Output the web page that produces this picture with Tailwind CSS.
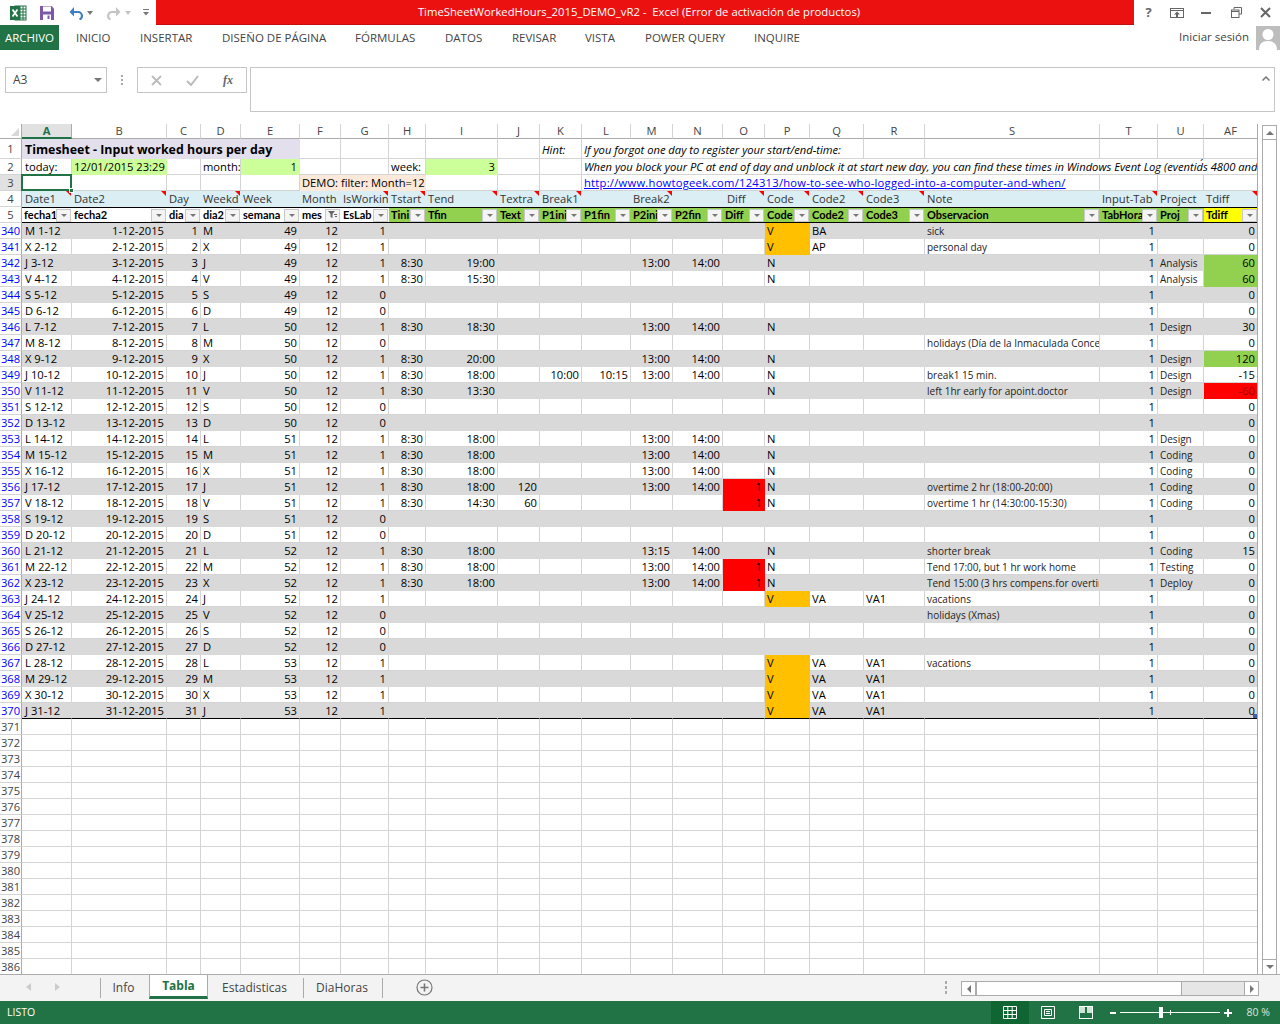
<!DOCTYPE html>
<html lang="es">
<head>
<meta charset="utf-8">
<title>Excel</title>
<script src="https://cdn.jsdelivr.net/npm/@tailwindcss/browser@4"></script>
</head>
<body class="m-0 bg-white">
<div class="w-[1280px] h-[1024px] overflow-hidden flex flex-col bg-white font-['Open_Sans','Liberation_Sans',sans-serif] text-[#444]">

  <!-- title bar -->
  <div class="h-[25px] flex shrink-0">
    <div class="w-[156px] flex items-center relative shrink-0">
      <svg class="ml-[9px]" width="18" height="18" viewBox="0 0 18 18"><rect x="6" y="2" width="11" height="14" fill="#fff" stroke="#217346"/><path d="M11 2v14M14 2v14M6 5h11M6 8h11M6 11h11M6 14h11" stroke="#217346" stroke-width="1"/><rect x="1" y="2" width="10" height="14" fill="#217346"/><path d="M3.5 5.5l5 7M8.500 5.500l-5 7" stroke="#fff" stroke-width="1.800"/></svg>
      <svg class="ml-[12px]" width="16" height="16" viewBox="0 0 16 16"><path d="M1 1h11.500L15 3.500V15H1z" fill="#7e57a8"/><rect x="4" y="1.500" width="8" height="5" fill="#fff"/><rect x="4" y="9.500" width="8" height="5.500" fill="#fff"/><rect x="8.500" y="10.500" width="2" height="3.500" fill="#7e57a8"/></svg>
      <svg class="ml-[13px]" width="16" height="14" viewBox="0 0 16 14"><path d="M4 6h6a4 4 0 0 1 4 4c0 1.500-1 3-2.500 3.500" fill="none" stroke="#3f7fc0" stroke-width="2.200"/><path d="M6 1L1.500 6 6 10.500z" fill="#3f7fc0"/></svg>
      <svg class="ml-[3px]" width="6" height="4" viewBox="0 0 6 4"><path d="M0 0h6L3 4z" fill="#777"/></svg>
      <svg class="ml-[13px]" width="16" height="14" viewBox="0 0 16 14"><path d="M12 6H6a4 4 0 0 0-4 4c0 1.500 1 3 2.500 3.500" fill="none" stroke="#c4c4c4" stroke-width="2.200"/><path d="M10 1l4.500 5L10 10.500z" fill="#c4c4c4"/></svg>
      <svg class="ml-[3px]" width="6" height="4" viewBox="0 0 6 4"><path d="M0 0h6L3 4z" fill="#c4c4c4"/></svg>
      <svg class="ml-[12px]" width="6" height="7" viewBox="0 0 6 7"><path d="M0 0h6v1H0zM0 3h6L3 6.500z" fill="#777"/></svg>
    </div>
    <div class="w-[978px] bg-[#eb1111] border-b border-[#c40f0f] text-white text-[11.300px] flex items-center justify-center pt-[1px] pr-[12px] whitespace-pre">TimeSheetWorkedHours_2015_DEMO_vR2 -  Excel (Error de activación de productos)</div>
    <div class="flex-1 flex items-center text-[#666] relative">
      <span class="w-[29px] text-center font-bold text-[13px] leading-none">?</span>
      <svg class="ml-[7px]" width="14" height="10" viewBox="0 0 14 10"><rect x=".5" y=".5" width="13" height="9" fill="none" stroke="#666"/><path d="M.5 2.500h13" stroke="#666"/><path d="M7 3.500l-3 3h2v2.500h2V6.500h2z" fill="#666"/></svg>
      <svg class="ml-[17px]" width="10" height="2" viewBox="0 0 10 2"><rect width="10" height="2" fill="#666"/></svg>
      <svg class="ml-[20px]" width="11" height="11" viewBox="0 0 11 11"><path d="M3 2.500V.5h7.500V7H8" fill="none" stroke="#666"/><rect x=".5" y="3" width="7.500" height="7.500" fill="none" stroke="#666"/><path d="M.5 4.500h7.500" stroke="#666"/></svg>
      <svg class="ml-[18px]" width="11" height="11" viewBox="0 0 11 11"><path d="M1 1l9 9M10 1l-9 9" stroke="#666" stroke-width="2"/></svg>
    </div>
  </div>

  <!-- ribbon tabs -->
  <div class="h-[25px] flex shrink-0 items-center text-[11.500px] text-[#444] relative">
    <div class="w-[59px] h-[25px] bg-[#217346] text-white flex items-center justify-center shrink-0">ARCHIVO</div>
    <div class="ml-[17px] w-[64px]">INICIO</div>
    <div class="w-[82px]">INSERTAR</div>
    <div class="w-[133px]">DISEÑO DE PÁGINA</div>
    <div class="w-[90px]">FÓRMULAS</div>
    <div class="w-[67px]">DATOS</div>
    <div class="w-[73px]">REVISAR</div>
    <div class="w-[60px]">VISTA</div>
    <div class="w-[109px]">POWER QUERY</div>
    <div class="w-[200px]">INQUIRE</div>
    <div class="ml-auto flex items-center h-[25px]">
      <span class="mr-[7px] pb-[2px]">Iniciar sesión</span>
      <svg width="24" height="24" viewBox="0 0 24 24" class="mr-[0px]"><rect width="24" height="24" fill="#bdbdbd"/><circle cx="12" cy="8.500" r="5.500" fill="#fff"/><path d="M3 24c0-6 3-9 9-9s9 3 9 9z" fill="#fff"/></svg>
    </div>
  </div>

  <!-- formula bar -->
  <div class="h-[74px] shrink-0 flex pt-[17px] pl-[5px] pr-[5px]">
    <div class="w-[102px] h-[26px] border border-[#c6c6c6] flex items-center justify-between pl-[7px] pr-[4px] text-[12px] text-[#444]">A3
      <svg width="8" height="4" viewBox="0 0 8 4"><path d="M0 0h8L4 4z" fill="#777"/></svg>
    </div>
    <div class="w-[30px] h-[26px] flex flex-col items-center justify-center gap-[2px]"><i class="block w-[2px] h-[2px] bg-[#aaa]"></i><i class="block w-[2px] h-[2px] bg-[#aaa]"></i><i class="block w-[2px] h-[2px] bg-[#aaa]"></i></div>
    <div class="w-[110px] h-[26px] border border-[#c6c6c6] flex items-center shrink-0">
      <svg class="ml-[13px]" width="11" height="11" viewBox="0 0 11 11"><path d="M1 1l9 9M10 1l-9 9" stroke="#bbb" stroke-width="1.800"/></svg>
      <svg class="ml-[24px]" width="13" height="11" viewBox="0 0 13 11"><path d="M1 6l4 4 7-9" fill="none" stroke="#bbb" stroke-width="2"/></svg>
      <span class="ml-[24px] font-['Liberation_Serif',serif] italic font-bold text-[12px] text-[#666]">fx</span>
    </div>
    <div class="ml-[3px] flex-1 h-[45px] border border-[#c6c6c6] flex justify-end pt-[8px] pr-[4px]">
      <svg width="8" height="5" viewBox="0 0 8 5"><path d="M.5 4.500L4 1l3.500 3.500" fill="none" stroke="#777" stroke-width="1.500"/></svg>
    </div>
  </div>

  <!-- sheet -->
  <div class="h-[850px] shrink-0 flex">
    <div id="sheet" class="w-[1258px] grid grid-cols-[22px_50px_95px_34px_40px_59px_41px_48px_37px_72px_42px_42px_49px_42px_50px_42px_45px_54px_61px_175px_58px_46px_54px] content-start text-[11.200px] text-black overflow-hidden border-r border-[#ababab]"></div>
    <div class="ml-[4px] mt-[1px] w-[15px] h-[850px] flex flex-col shrink-0">
      <div class="h-[15px] border border-[#ababab] flex items-center justify-center"><svg width="8" height="4" viewBox="0 0 8 4"><path d="M0 4h8L4 0z" fill="#777"/></svg></div>
      <div class="flex-1 border-x border-b border-[#ababab]"></div>
      <div class="h-[15px] border-x border-b border-[#ababab] flex items-center justify-center"><svg width="8" height="4" viewBox="0 0 8 4"><path d="M0 0h8L4 4z" fill="#777"/></svg></div>
    </div>
  </div>

  <!-- sheet tabs -->
  <div class="h-[27px] shrink-0 bg-[#f3f3f3] border-t border-[#ababab] flex text-[12px] text-[#444] relative">
    <svg class="ml-[26px] mt-[8px]" width="5" height="8" viewBox="0 0 5 8"><path d="M5 0v8L0 4z" fill="#ccc"/></svg>
    <svg class="ml-[24px] mt-[8px]" width="5" height="8" viewBox="0 0 5 8"><path d="M0 0v8l5-4z" fill="#ccc"/></svg>
    <div class="ml-[40px] mt-[3px] h-[20px] w-[49px] pr-[3px] pb-[1px] border-l border-[#ababab] flex items-center justify-center">Info</div>
    <div class="w-[59px] h-[24px] bg-white border-x border-[#ababab] border-b-[3px] border-b-[#217346] flex items-center justify-center font-bold text-[#217346]">Tabla</div>
    <div class="mt-[3px] h-[20px] w-[95px] pr-[2px] pb-[1px] flex items-center justify-center">Estadisticas</div>
    <div class="mt-[3px] h-[20px] w-[80px] pr-[2px] pb-[1px] border-x border-[#ababab] flex items-center justify-center">DiaHoras</div>
    <svg class="ml-[33px] mt-[4px]" width="17" height="17" viewBox="0 0 17 17"><circle cx="8.500" cy="8.500" r="7.500" fill="none" stroke="#777" stroke-width="1.200"/><path d="M8.500 4.500v8M4.500 8.500h8" stroke="#777" stroke-width="1.600"/></svg>
    <div class="ml-[512px] mt-[6px] flex flex-col gap-[2px]"><i class="block w-[2px] h-[3px] bg-[#aaa]"></i><i class="block w-[2px] h-[3px] bg-[#aaa]"></i><i class="block w-[2px] h-[3px] bg-[#aaa]"></i></div>
    <div class="ml-[14px] mt-[6px] w-[298px] h-[15px] flex border border-[#ababab] bg-[#e6e6e6]">
      <div class="w-[15px] border-r-2 border-[#ababab] bg-white flex items-center justify-center"><svg width="4" height="8" viewBox="0 0 4 8"><path d="M4 0v8L0 4z" fill="#777"/></svg></div>
      <div class="w-[205px] bg-white border-r border-[#ababab]"></div>
      <div class="flex-1"></div>
      <div class="w-[14px] border-l border-[#ababab] bg-white flex items-center justify-center"><svg width="4" height="8" viewBox="0 0 4 8"><path d="M0 0v8l4-4z" fill="#777"/></svg></div>
    </div>
  </div>

  <!-- status bar -->
  <div class="h-[23px] shrink-0 bg-[#217346] text-white text-[10.500px] flex items-center">
    <span class="ml-[7px]">LISTO</span>
    <div class="ml-auto flex items-center h-full">
      <div class="w-[38px] h-full bg-[#0f6632] flex items-center justify-center"><svg width="14" height="13" viewBox="0 0 14 13"><path d="M.5.500h13v12H.500zM.5 4.500h13M.5 8.500h13M4.800.5v12M9.200.5v12" fill="none" stroke="#fff"/></svg></div>
      <div class="ml-[12px] w-[14px] flex"><svg width="14" height="13" viewBox="0 0 14 13"><path d="M.5.500h13v12H.500zM3.500 3.500h7v6h-7zM5 5.500h4M5 7.500h4" fill="none" stroke="#fff"/></svg></div>
      <div class="ml-[24px] w-[14px] flex"><svg width="14" height="13" viewBox="0 0 14 13"><rect x=".5" y=".5" width="13" height="12" fill="none" stroke="#fff"/><rect x="1" y="1" width="5" height="6" fill="#cfe3d8"/><rect x="8" y="1" width="5" height="6" fill="#cfe3d8"/></svg></div>
      <svg class="ml-[17px]" width="6" height="2" viewBox="0 0 6 2"><rect width="6" height="2" fill="#fff"/></svg>
      <div class="ml-[4px] w-[100px] h-[1px] bg-white relative"><i class="absolute left-[39px] -top-[5px] block w-[4px] h-[11px] bg-white"></i><i class="absolute left-[50px] -top-[2px] block w-[1px] h-[5px] bg-white"></i></div>
      <svg class="ml-[4px]" width="8" height="8" viewBox="0 0 8 8"><path d="M0 3h8v2H0zM3 0h2v8H3z" fill="#fff"/></svg>
      <span class="ml-[15px] mr-[10px] text-[#d9e8df]">80 %</span>
    </div>
  </div>
</div>

<script>
const GRAY = 'bg-[#d9d9d9] border-[#d9d9d9]';
const BASE = 'relative h-4 border-r border-b overflow-hidden whitespace-nowrap px-[2px] leading-[15px]';
const LINE = 'border-[#d4d4d4]';
const TRI = '<i class="absolute top-0 right-0 w-0 h-0 border-l-[5px] border-l-transparent border-t-[5px] border-t-[#ff0000]"></i>';
const ARROW = '<svg width="6" height="3" viewBox="0 0 6 3"><path d="M0 0h6L3 3z" fill="#777"/></svg>';
const FUNNEL = '<svg width="9" height="8" viewBox="0 0 9 8"><path d="M0 0h7L4.500 3v4L2.500 6V3z" fill="#666"/><path d="M6 3h3v1H6zM7 5h2v1H7z" fill="#666"/></svg>';
const BOLD = "font-['Lato',sans-serif]";
let h = '';
const cols = ['A','B','C','D','E','F','G','H','I','J','K','L','M','N','O','P','Q','R','S','T','U','AF'];

/* column letters */
h += '<div class="h-[15px] border-r border-b border-[#ababab] relative"><i class="absolute right-[2px] bottom-[2px] w-0 h-0 border-l-[8px] border-l-transparent border-b-[8px] border-b-[#d8d8d8]"></i></div>';
cols.forEach(function (c) {
  h += c === 'A'
    ? '<div class="h-[15px] bg-[#e1e1e1] border-r border-[#ababab] border-b-2 border-b-[#217346] text-center leading-[13px] font-bold text-[#217346]">A</div>'
    : '<div class="h-[15px] border-r border-b border-[#d4d4d4] border-b-[#ababab] text-center leading-[14px] text-[#444]">' + c + '</div>';
});

function rowHead(t, cls) {
  return '<div class="h-4 border-r border-b border-[#d4d4d4] border-r-[#ababab] text-center leading-[15px] ' + cls + '">' + t + '</div>';
}

/* row 1 */
h += '<div class="h-5 border-r border-b border-[#d4d4d4] border-r-[#ababab] text-center leading-[20px] text-[#444]">1</div>';
h += '<div class="col-span-5 h-5 bg-[#e4dfec] font-bold text-[12.400px] leading-[22px] pl-[3px] whitespace-nowrap">Timesheet - Input worked hours per day</div>';
for (let i = 0; i < 5; i++) h += '<div class="h-5 border-r border-b border-[#d4d4d4]"></div>';
h += '<div class="h-5 border-r border-b border-[#d4d4d4] italic leading-[22px] px-[2px]">Hint:</div>';
h += '<div class="col-span-6 h-5 border-r border-b border-[#d4d4d4] italic leading-[22px] px-[2px] whitespace-nowrap">If you forgot one day to register your start/end-time:</div>';
for (let i = 0; i < 5; i++) h += '<div class="h-5 border-r border-b border-[#d4d4d4]"></div>';

/* row 2 */
h += rowHead('2', 'text-[#444]');
const r2 = [['today:',''],['12/01/2015 23:29','g'],['',''],['month:',''],['1','g'],['',''],['',''],['week:',''],['3','g'],['',''],['','']];
r2.forEach(function (c, i) {
  h += c[1] === 'g'
    ? '<div class="' + BASE + ' bg-[#ccff99] border-[#ccff99] text-right">' + c[0] + '</div>'
    : '<div class="' + BASE + ' ' + LINE + (i === 0 ? ' pl-[3px]' : '') + '">' + c[0] + '</div>';
});
h += '<div class="col-span-11 ' + BASE + ' ' + LINE + ' italic">When you block your PC at end of day and unblock it at start new day, you can find these times in Windows Event Log (eventid´s 4800 and 4801)</div>';

/* row 3 */
h += rowHead('3', 'bg-[#e1e1e1] text-[#444]');
h += '<div class="relative h-4 border-r border-b ' + LINE + '"><div class="absolute -left-[1px] -top-[1px] w-[51px] h-[17px] border-2 border-[#217346] z-10"></div><i class="absolute -right-[3px] -bottom-[3px] block w-[5px] h-[5px] bg-[#217346] border border-white z-20"></i></div>';
for (let i = 0; i < 4; i++) h += '<div class="' + BASE + ' ' + LINE + '"></div>';
h += '<div class="col-span-3 ' + BASE + ' bg-[#fde9d9] border-[#fde9d9]">DEMO: filter: Month=12</div>';
for (let i = 0; i < 3; i++) h += '<div class="' + BASE + ' ' + LINE + '"></div>';
h += '<div class="col-span-8 ' + BASE + ' ' + LINE + ' text-[#0000ff] underline tracking-[0.25px]">http://www.howtogeek.com/124313/how-to-see-who-logged-into-a-computer-and-when/</div>';
for (let i = 0; i < 3; i++) h += '<div class="' + BASE + ' ' + LINE + '"></div>';

/* row 4 */
h += rowHead('4', 'text-[#444]');
const r4 = [['Date1',1],['Date2',1],['Day',0],['Weekd',1],['Week',0],['Month',0],['IsWorkin',1],['Tstart',1],['Tend',1],['Textra',1],['Break1',1],['',0],['Break2',1],['',0],['Diff',1],['Code',1],['Code2',1],['Code3',1],['Note',0],['Input-Tab',1],['Project',0],['Tdiff',1]];
r4.forEach(function (c, i) {
  h += '<div class="' + BASE + ' bg-[#daeef3] border-[#daeef3] text-[#333]' + (c[0] === 'Diff' ? ' pl-[4px]' : '') + (i === 0 ? ' pl-[3px]' : '') + '">' + c[0] + (c[1] ? TRI : '') + '</div>';
});

/* row 5 */
h += rowHead('5', 'text-[#444]');
const r5 = ['fecha1','fecha2','dia','dia2','semana','mes','EsLab','Tini','Tfin','Text','P1ini','P1fin','P2ini','P2fin','Diff','Code','Code2','Code3','Observacion','TabHora','Proj','Tdiff'];
r5.forEach(function (t, i) {
  const bg = i < 7 ? 'bg-white' : (t === 'Tdiff' ? 'bg-[#ffff00]' : 'bg-[#92d050]');
  h += '<div class="h-4 flex items-center border-y border-black font-bold ' + BOLD + ' text-[11px] pl-[2px] pr-[1px] ' + bg + '"><span class="flex-1 min-w-0 overflow-hidden whitespace-nowrap leading-[14px]">' + t + '</span><span class="w-[15px] h-[13px] shrink-0 bg-[#f4f4f4] border border-[#c8c8c8] flex items-center justify-center">' + (t === 'mes' ? FUNNEL : ARROW) + '</span></div>';
});

/* data rows */
const WD = ['M','X','J','V','S','D','L'];
const D = {
  1:{P:'V',Q:'BA',S:'sick'},
  2:{P:'V',Q:'AP',S:'personal day'},
  3:{H:'8:30',I:'19:00',M:'13:00',N:'14:00',P:'N',U:'Analysis',AF:'60'},
  4:{H:'8:30',I:'15:30',P:'N',U:'Analysis',AF:'60'},
  7:{H:'8:30',I:'18:30',M:'13:00',N:'14:00',P:'N',U:'Design',AF:'30'},
  8:{S:'holidays (Día de la Inmaculada Concepción)'},
  9:{H:'8:30',I:'20:00',M:'13:00',N:'14:00',P:'N',U:'Design',AF:'120'},
  10:{H:'8:30',I:'18:00',K:'10:00',L:'10:15',M:'13:00',N:'14:00',P:'N',S:'break1 15 min.',U:'Design',AF:'-15'},
  11:{H:'8:30',I:'13:30',P:'N',S:'left 1hr early for apoint.doctor',U:'Design',AF:'-60'},
  14:{H:'8:30',I:'18:00',M:'13:00',N:'14:00',P:'N',U:'Design'},
  15:{H:'8:30',I:'18:00',M:'13:00',N:'14:00',P:'N',U:'Coding'},
  16:{H:'8:30',I:'18:00',M:'13:00',N:'14:00',P:'N',U:'Coding'},
  17:{H:'8:30',I:'18:00',J:'120',M:'13:00',N:'14:00',O:'1',P:'N',S:'overtime 2 hr (18:00-20:00)',U:'Coding'},
  18:{H:'8:30',I:'14:30',J:'60',O:'1',P:'N',S:'overtime 1 hr (14:30:00-15:30)',U:'Coding'},
  21:{H:'8:30',I:'18:00',M:'13:15',N:'14:00',P:'N',S:'shorter break',U:'Coding',AF:'15'},
  22:{H:'8:30',I:'18:00',M:'13:00',N:'14:00',O:'1',P:'N',S:'Tend 17:00, but 1 hr work home',U:'Testing'},
  23:{H:'8:30',I:'18:00',M:'13:00',N:'14:00',O:'1',P:'N',S:'Tend 15:00 (3 hrs compens.for overtime)',U:'Deploy'},
  24:{P:'V',Q:'VA',R:'VA1',S:'vacations'},
  25:{S:'holidays (Xmas)'},
  28:{P:'V',Q:'VA',R:'VA1',S:'vacations'},
  29:{P:'V',Q:'VA',R:'VA1'},
  30:{P:'V',Q:'VA',R:'VA1'},
  31:{P:'V',Q:'VA',R:'VA1'}
};
const ZERO = {5:1,6:1,8:1,12:1,13:1,19:1,20:1,25:1,26:1,27:1};
const RIGHT = {H:1,I:1,J:1,K:1,L:1,M:1,N:1,O:1,T:1,AF:1};

for (let d = 1; d <= 31; d++) {
  const g = d % 2 === 1;
  const last = d === 31;
  const data = D[d] || {};
  const wk = d <= 6 ? 49 : d <= 13 ? 50 : d <= 20 ? 51 : d <= 27 ? 52 : 53;
  const vals = {
    A: WD[(d - 1) % 7] + ' ' + d + '-12', B: d + '-12-2015', C: d, D: WD[(d - 1) % 7], E: wk, F: 12, G: ZERO[d] ? 0 : 1, T: 1,
    AF: data.AF || '0'
  };
  h += '<div class="h-4 border-r border-b border-[#d4d4d4] border-r-[#ababab] text-center leading-[15px] text-[#0000ff]">' + (339 + d) + '</div>';
  cols.forEach(function (c) {
    const v = vals[c] !== undefined ? vals[c] : (data[c] || '');
    let cls = g ? GRAY : LINE;
    if (c === 'P' && v === 'V') cls = 'bg-[#ffc000] border-[#ffc000]';
    if (c === 'O' && v === '1') cls = 'bg-[#ff0000] border-[#ff0000] text-black';
    if (c === 'AF' && (v === '60' || v === '120')) cls = 'bg-[#92d050] border-[#92d050]';
    if (c === 'AF' && v === '-60') cls = 'bg-[#ff0000] border-[#ff0000] text-[#9c0006]';
    let extra = '';
    if (['B','C','E','F','G'].indexOf(c) >= 0) extra += ' text-right';
    if (RIGHT[c]) extra += ' text-right';
    if (c === 'S' || c === 'U') extra += ' text-[10px] text-[#222] leading-[17px]';
    if (c === 'A') extra += ' pl-[3px]';
    if (last) extra += ' border-b-black';
    let inner = v;
    if (last && c === 'AF') inner += '<i class="absolute right-0 bottom-0 block w-[4px] h-[4px] bg-[#3f5fa8]"></i>';
    h += '<div class="' + BASE + ' ' + cls + extra + '">' + inner + '</div>';
  });
}

/* empty rows */
for (let r = 371; r <= 386; r++) {
  h += '<div class="h-4 border-r border-b border-[#d4d4d4] border-r-[#ababab] text-center leading-[15px] text-[#444]">' + r + '</div>';
  cols.forEach(function () { h += '<div class="h-4 border-r border-b border-[#d4d4d4]"></div>'; });
}
document.getElementById('sheet').innerHTML = h;
</script>
</body>
</html>
